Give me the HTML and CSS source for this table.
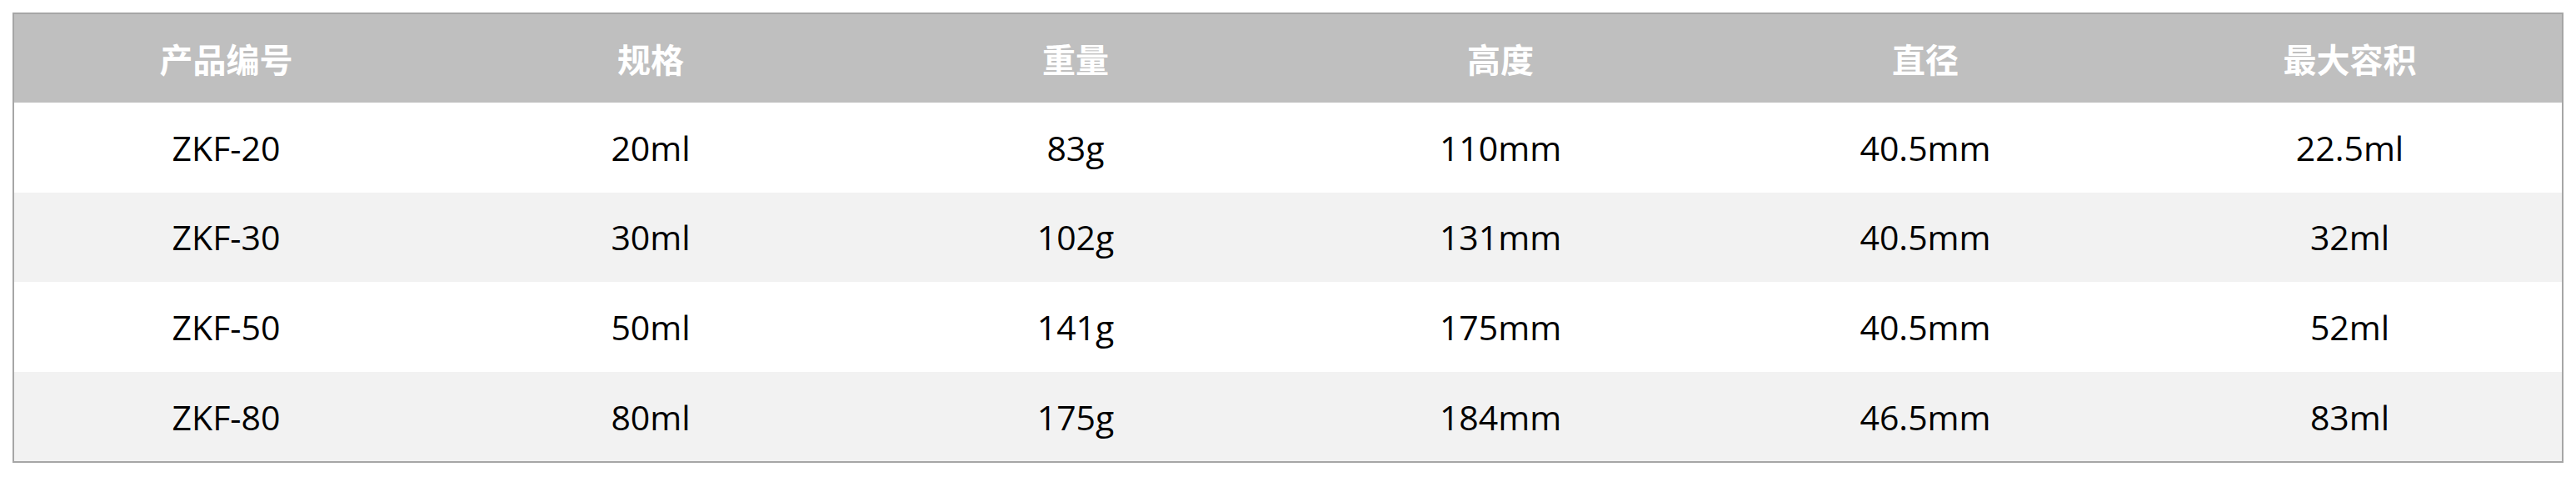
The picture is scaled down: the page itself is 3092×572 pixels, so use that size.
FILE: index.html
```html
<!DOCTYPE html>
<html lang="zh-CN">
<head>
<meta charset="utf-8">
<title>产品规格</title>
<link rel="stylesheet" href="styles.css">
</head>
<body>
<table class="spec">
  <thead>
    <tr>
      <th>产品编号</th><th>规格</th><th>重量</th><th>高度</th><th>直径</th><th>最大容积</th>
    </tr>
  </thead>
  <tbody>
    <tr><td>ZKF-20</td><td>20ml</td><td>83g</td><td>110mm</td><td>40.5mm</td><td>22.5ml</td></tr>
    <tr><td>ZKF-30</td><td>30ml</td><td>102g</td><td>131mm</td><td>40.5mm</td><td>32ml</td></tr>
    <tr><td>ZKF-50</td><td>50ml</td><td>141g</td><td>175mm</td><td>40.5mm</td><td>52ml</td></tr>
    <tr><td>ZKF-80</td><td>80ml</td><td>175g</td><td>184mm</td><td>46.5mm</td><td>83ml</td></tr>
  </tbody>
</table>
</body>
</html>
```
FILE: styles.css
```css
html, body {
  margin: 0;
  padding: 0;
  background: #ffffff;
}
body {
  padding: 15px;
  font-family: "Open Sans", "Noto Sans CJK SC", sans-serif;
}
.spec {
  width: 3062px;
  border-collapse: collapse;
  border: 2px solid #a6a6a6;
  table-layout: fixed;
}
.spec th,
.spec td {
  padding: 0;
  text-align: center;
  vertical-align: middle;
  height: 107.6px;
}
.spec th {
  background: #bfbfbf;
  color: #ffffff;
  font-family: "Noto Sans CJK SC", sans-serif;
  font-weight: 700;
  font-size: 40px;
  height: 106px;
}
.spec td {
  color: #000000;
  font-size: 41px;
}
.spec tbody tr:nth-child(even) td {
  background: #f2f2f2;
}
```
